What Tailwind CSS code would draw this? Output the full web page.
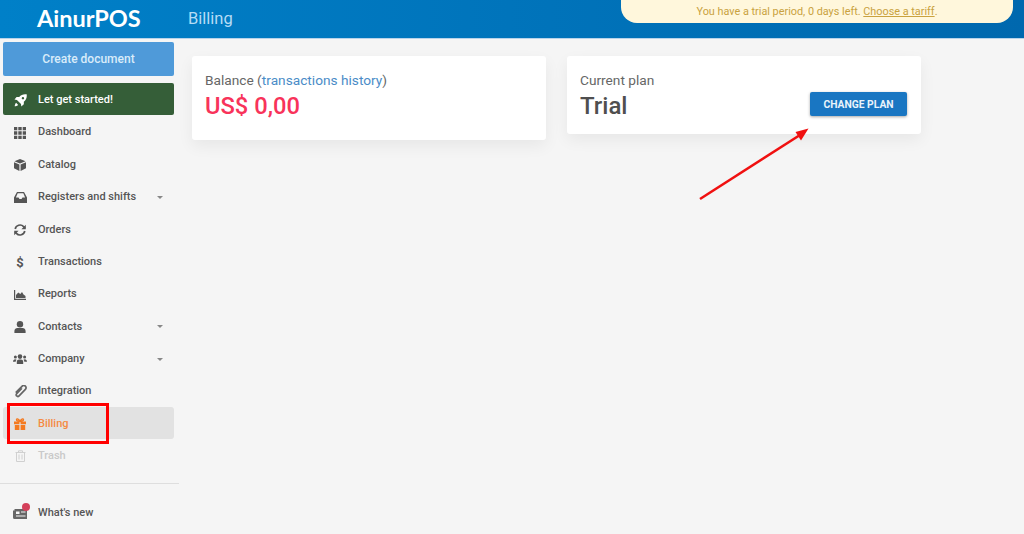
<!doctype html>
<html lang="en">
  <head>
    <meta charset="UTF-8" />
    <meta name="viewport" content="width=device-width, initial-scale=1.0" />
    <script src="https://cdn.jsdelivr.net/npm/@tailwindcss/browser@4"></script>
    <title>AinurPOS - Billing</title>
  </head>
  <body class="relative h-[534px] w-[1024px] overflow-hidden bg-[#f5f5f5] font-['Roboto',sans-serif] text-[#555]">
    <header class="relative flex h-[39px] items-center border-b border-[#b9d3ea] bg-gradient-to-r from-[#0080c8] to-[#0068ae]">
      <div class="ml-[37px] w-[151px] font-['Lato',sans-serif] text-[23.5px] font-bold leading-none text-white">AinurPOS</div>
      <div class="text-[16.5px] text-[#b5dcf5]">Billing</div>
      <div class="absolute -top-px left-[621px] flex h-[24px] w-[392px] items-end justify-center rounded-b-[16px] bg-[#fff7dc] pb-[5px] text-[10.85px] leading-none text-[#c9a23f]">
        <span>You have a trial period, 0 days left. <a href="#" class="underline">Choose a tariff</a>.</span>
      </div>
    </header>

    <div class="flex h-[495px]">
      <aside class="flex w-[179px] shrink-0 flex-col px-[3px] pt-[3px] text-[11px] font-medium text-[#555]">
        <button class="h-[34px] w-[171px] rounded-[2px] bg-[#4f9ad9] text-[12px] font-medium text-[#d9ecfa]">Create document</button>
        <a href="#" class="mt-[7px] flex h-[32px] w-[171px] items-center rounded-[2px] bg-[#355e38] pt-[2px] text-white">
          <span class="mr-px flex w-[34px] justify-center">
            <svg class="h-[13px] w-[13px]" viewBox="0 0 16 16" fill="#fff"><path d="M15.6.4c-3.6-.6-7 .5-9.2 3.4H3.2L.6 6.9l3 .4 5 5 .4 3 3.1-2.6V9.5c2.9-2.2 4-5.600 3.500-9.100zM11 6.600a1.500 1.500 0 1 1 0-3 1.500 1.500 0 0 1 0 3zM2.600 10.800C1.400 11.800 1 14 .8 15.200c1.300-.2 3.400-.6 4.400-1.800z"/></svg>
          </span>
          Let get started!
        </a>
        <nav class="flex flex-col pt-[0.4px]">
          <a href="#" class="flex h-[32.4px] w-[171px] items-center pt-[2px]">
            <span class="mr-px flex w-[34px] justify-center"><svg class="h-[12px] w-[12px]" viewBox="0 0 12 12" fill="#555"><path d="M0 0h3.300v3.300H0zM4.300 0h3.400v3.300H4.300zM8.700 0H12v3.300H8.700zM0 4.300h3.300v3.400H0zM4.300 4.300h3.400v3.400H4.300zM8.700 4.300H12v3.400H8.700zM0 8.700h3.300V12H0zM4.300 8.700h3.400V12H4.300zM8.700 8.700H12V12H8.700z"/></svg></span>
            Dashboard
          </a>
          <a href="#" class="flex h-[32.4px] w-[171px] items-center pt-[2px]">
            <span class="mr-px flex w-[34px] justify-center"><svg class="h-[12px] w-[12px]" viewBox="0 0 12 12" fill="#555"><path d="M6 0 .4 2.200 6 4.500l5.600-2.300zM0 3.200v6.100L5.400 12V5.500zM12 3.200 6.600 5.500V12L12 9.300z"/></svg></span>
            Catalog
          </a>
          <a href="#" class="flex h-[32.4px] w-[171px] items-center pt-[2px]">
            <span class="mr-px flex w-[34px] justify-center"><svg class="h-[11px] w-[13px]" viewBox="0 0 13 11" fill="#555"><path d="M3 0h7l3 5.500V11H0V5.500zM3.700 1.300 1.900 5.400h2.600l1 1.500h2l1-1.500h2.600L9.300 1.300z"/></svg></span>
            <span class="grow">Registers and shifts</span>
            <span class="mr-[11px] h-0 w-0 border-x-[3px] border-t-[3px] border-x-transparent border-t-[#888]"></span>
          </a>
          <a href="#" class="flex h-[32.4px] w-[171px] items-center pt-[2px]">
            <span class="mr-px flex w-[34px] justify-center"><svg class="h-[12px] w-[12px]" viewBox="0 0 12 12" fill="none" stroke="#555" stroke-width="1.700"><path d="M1.200 5A4.900 4.900 0 0 1 9.600 2.600L11 4M10.800 7A4.900 4.900 0 0 1 2.400 9.400L1 8"/><path fill="#555" stroke="none" d="M11.800.8v4.400H7.400zM.2 11.200V6.800h4.400z"/></svg></span>
            Orders
          </a>
          <a href="#" class="flex h-[32.4px] w-[171px] items-center pt-[2px]">
            <span class="mr-px flex w-[34px] justify-center text-[13px] font-bold leading-none">$</span>
            Transactions
          </a>
          <a href="#" class="flex h-[32.4px] w-[171px] items-center pt-[2px]">
            <span class="mr-px flex w-[34px] justify-center"><svg class="h-[10px] w-[12px]" viewBox="0 0 12 10" fill="#555"><path d="M0 0h1.200v8.800H12V10H0z"/><path d="M2 8V5l2.300-2.600 2 1.600L8 2l1.500 2.400L11.500 6v2z"/></svg></span>
            Reports
          </a>
          <a href="#" class="flex h-[32.4px] w-[171px] items-center pt-[2px]">
            <span class="mr-px flex w-[34px] justify-center"><svg class="h-[12px] w-[12px]" viewBox="0 0 12 12" fill="#555"><circle cx="6" cy="3.200" r="3.200"/><path d="M.4 12V10c0-2 1.600-3 3-3h5.200c1.400 0 3 1 3 3v2z"/></svg></span>
            <span class="grow">Contacts</span>
            <span class="mr-[11px] h-0 w-0 border-x-[3px] border-t-[3px] border-x-transparent border-t-[#888]"></span>
          </a>
          <a href="#" class="flex h-[32.4px] w-[171px] items-center pt-[2px]">
            <span class="mr-px flex w-[34px] justify-center"><svg class="h-[10px] w-[14px]" viewBox="0 0 14 10" fill="#555"><circle cx="7" cy="2.600" r="2.300"/><circle cx="2.400" cy="3" r="1.500"/><circle cx="11.600" cy="3" r="1.500"/><path d="M3.800 10V7.800C3.800 6.300 5 5.500 6 5.500h2c1 0 2.200.8 2.200 2.300V10zM0 7.800C0 6 1 5.200 2.200 5.200c.6 0 1 .2 1.300.5-.6.6-.8 1.300-.8 2.100zM14 7.800c0-1.800-1-2.600-2.200-2.600-.6 0-1 .2-1.300.5.6.6.8 1.300.8 2.100z"/></svg></span>
            <span class="grow">Company</span>
            <span class="mr-[11px] h-0 w-0 border-x-[3px] border-t-[3px] border-x-transparent border-t-[#888]"></span>
          </a>
          <a href="#" class="flex h-[32.4px] w-[171px] items-center pt-[2px]">
            <span class="mr-px flex w-[34px] justify-center"><svg class="h-[13px] w-[13px]" viewBox="0 0 12 12" fill="none" stroke="#666" stroke-width="1.600"><path d="M7.300 3 2.500 7.900c-1.500 1.600.7 3.600 2.200 2.100l5.800-5.900c2-2.100-1-5-3.100-2.900L1.600 7"/></svg></span>
            Integration
          </a>
          <a href="#" class="flex h-[32.4px] w-[171px] items-center rounded-[3px] bg-[#e2e2e2] pt-[2px] text-[#f58a42]">
            <span class="mr-px flex w-[34px] justify-center"><svg class="h-[12px] w-[12px]" viewBox="0 0 12 12" fill="#f47a20"><path d="M0 3.500h5.400v2.800H0zM6.600 3.500H12v2.800H6.600zM.8 7h4.600v5H.8zM6.600 7h4.600v5H6.600z"/><path fill="none" stroke="#f47a20" stroke-width="1.400" d="M6 3.300C5 1 2.800.2 2.500 1.600 2.300 3 4.500 3.300 6 3.300c1.500 0 3.700-.3 3.500-1.700C9.200.2 7 1 6 3.300z"/></svg></span>
            Billing
          </a>
          <a href="#" class="flex h-[32.4px] w-[171px] items-center pt-[2px] text-[#c9c9c9]">
            <span class="mr-px flex w-[34px] justify-center"><svg class="h-[12px] w-[11px]" viewBox="0 0 11 12" fill="none" stroke="#d0d0d0"><path d="M.5 2.500h10M3.500 2.500V.8h4v1.700M1.500 2.500v9h8v-9M4 4.500v5M7 4.500v5"/></svg></span>
            Trash
          </a>
        </nav>
        <div class="-mx-[3px] mt-[11px] border-t border-[#dedede]"></div>
        <a href="#" class="mt-[13px] flex h-[32px] w-[171px] items-center pt-[2px]">
          <span class="relative mr-px flex w-[34px] justify-center">
            <svg class="h-[10px] w-[14px]" viewBox="0 0 14 10" fill="#666"><path d="M0 1.500h1.500V0H14v10H1.500A1.500 1.500 0 0 1 0 8.500zM3 2.500V5h3.500V2.500zM8 2.500V3.500h4.500v-1zM3 6.500v1h9.500v-1z"/></svg>
            <span class="absolute left-[19px] -top-[6px] h-[8px] w-[8px] rounded-full bg-[#d4405a]"></span>
          </span>
          What's new
        </a>
      </aside>

      <main class="flex items-start gap-[21px] pl-[13px] pt-[17px]">
        <section class="h-[84px] w-[354px] rounded-[3px] bg-white px-[13px] pt-[16px] shadow-[0_6px_16px_rgba(0,0,0,0.06)]">
          <p class="text-[13.7px] leading-[17px] text-[#666]">Balance (<a href="#" class="text-[#4a8cc7]">transactions history</a>)</p>
          <p class="text-[23.7px] font-medium leading-[34px] text-[#f8335a]">US$ 0,00</p>
        </section>
        <section class="flex h-[78px] w-[354px] items-start justify-between rounded-[3px] bg-white px-[13px] shadow-[0_6px_16px_rgba(0,0,0,0.06)]">
          <div class="pt-[16px]">
            <p class="text-[13.7px] leading-[17px] text-[#666]">Current plan</p>
            <p class="text-[24px] font-medium leading-[34px] text-[#4f4f4f]">Trial</p>
          </div>
          <button class="mt-[36px] mr-px h-[24px] w-[97px] rounded-[2px] bg-[#1976c2] pt-px text-[10.3px] font-bold text-[#e9f3fb] shadow-[0_1px_3px_rgba(0,0,0,0.35)]">CHANGE PLAN</button>
        </section>
      </main>
    </div>

    <!-- annotations drawn over the screenshot -->
    <div class="absolute left-[7px] top-[403px] h-[41px] w-[102px] border-[3px] border-[#f00]"></div>
    <svg class="absolute left-0 top-0" width="1024" height="534" fill="none">
      <path d="M700 199 800 135" stroke="#f01010" stroke-width="2.600"/>
      <path d="M808.500 128.500 795.500 132 801 140.500z" fill="#f01010"/>
    </svg>
  </body>
</html>
